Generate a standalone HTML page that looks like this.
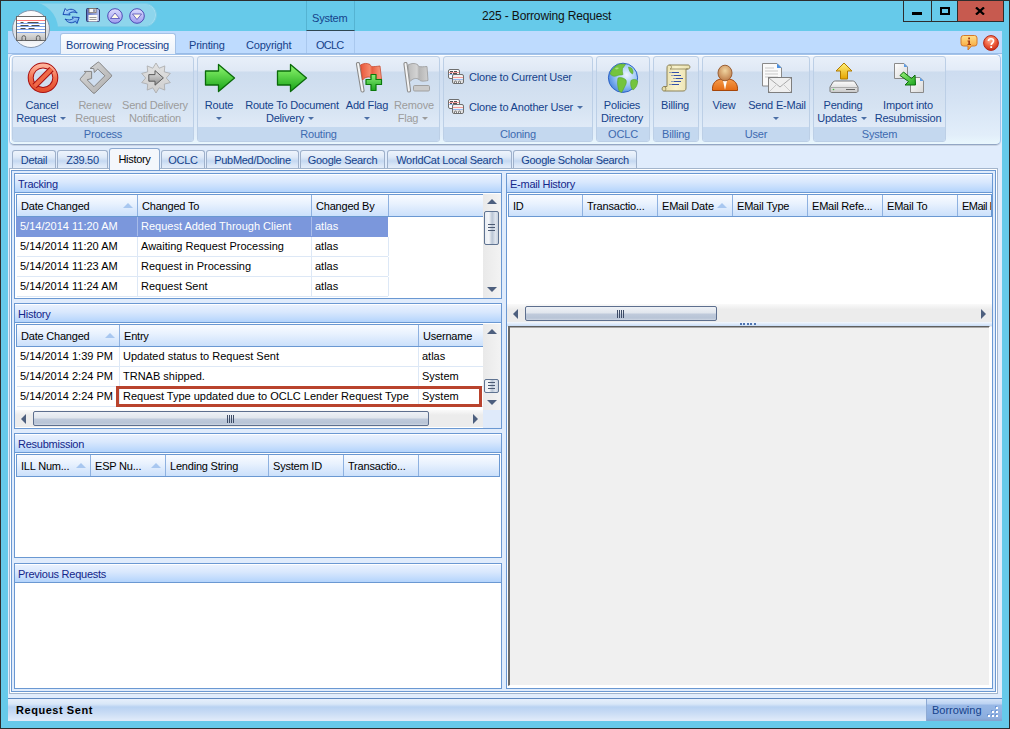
<!DOCTYPE html>
<html><head><meta charset="utf-8">
<style>
*{box-sizing:border-box;margin:0;padding:0}
html,body{width:1010px;height:729px;overflow:hidden;background:#66caea}
body{position:relative;font-family:"Liberation Sans",sans-serif;font-size:11px;color:#15428b}
.a{position:absolute}
.t{position:absolute;white-space:nowrap;line-height:13px}
.grp{position:absolute;top:56px;height:86px;border:1px solid #bccfe6;border-radius:3px;background:linear-gradient(#e8eff9 0,#dfe8f5 14px,#cddcee 15px,#d6e3f2 50px,#e0eaf7 70px);overflow:hidden}
.grp .lbl{position:absolute;left:0;right:0;bottom:0;height:14px;background:#c4d8ef;text-align:center;color:#3d6ab0;line-height:15px;letter-spacing:-0.2px}
.dis{color:#9c9c9c}
.dd{display:inline-block;width:0;height:0;border-left:3px solid transparent;border-right:3px solid transparent;border-top:3px solid #4b6fa6;vertical-align:middle;margin-left:4px;position:relative;top:-1px}
.ctab{position:absolute;top:150px;height:18px;border:1px solid #9eb0ca;border-bottom:0;border-radius:3px 3px 0 0;background:linear-gradient(#eef4fc 0,#dfeaf8 6px,#c5d8f1 10px,#d9e6f7 14px,#e6eefa 18px);text-align:center;color:#15428b;line-height:15px;padding-top:2px;letter-spacing:-0.3px}
.panel{position:absolute;border:1px solid #6a98d2;background:#fff}
.ph{position:absolute;left:0;right:0;top:0;height:19px;border-bottom:1px solid #6a98d2;background:linear-gradient(#e8f1fe 0,#d9e8fd 7px,#b0d2fc 18px);color:#13268a;padding-left:3px;line-height:19px;border-top:1px solid #fff;letter-spacing:-0.25px}
.gh{position:absolute;height:23px;border:1px solid #6a98d2;background:linear-gradient(#f9fbff 0,#e9f2fe 40%,#cbe0fb 100%)}
.gc{position:absolute;top:0;height:21px;border-right:1px solid #8eb1e0;color:#000;padding-left:4px;line-height:22px;letter-spacing:-0.2px;white-space:nowrap;overflow:hidden}
.row{position:absolute;height:20px;border-bottom:1px solid #dde8f6;color:#000;line-height:18px;white-space:nowrap}
.cell{position:absolute;top:0;height:19px;padding-left:3px;border-right:1px solid #dde8f6;overflow:hidden}
.sort{position:absolute;width:0;height:0;border-left:5px solid transparent;border-right:5px solid transparent;border-bottom:5px solid #a8c7f0}
</style></head><body>
<!-- window frame -->
<div class="a" style="left:0;top:0;width:1010px;height:729px;border:1px solid #2d2d2d;background:#66caea"></div>

<!-- QAT -->
<div class="a" style="left:36px;top:3px;width:121px;height:24px;border-radius:0 12px 12px 0;background:#8ed5ec;border:1px solid #7ccde8;box-shadow:inset -1px 0 0 #a6def0"></div>
<div class="a" style="left:4px;top:2px;width:54px;height:54px;border-radius:50%;background:#66caea"></div>
<!-- QAT icons -->
<svg class="a" style="left:62px;top:7px" width="18" height="18" viewBox="0 0 18 18">
<defs><linearGradient id="rfg" x1="0" y1="0" x2="1" y2="1"><stop offset="0" stop-color="#e6f4ff"/><stop offset="0.5" stop-color="#8cc2f4"/><stop offset="1" stop-color="#3b7fd8"/></linearGradient></defs>
<path d="M1 7.5 L3.2 1.5 L4.8 3.6 C8.5 1.2 12.5 2 15.2 6 C12.5 4.6 9.5 4.6 7 6.5 L8.2 8 Z" fill="url(#rfg)" stroke="#1b4db3" stroke-width="1" stroke-linejoin="round"/>
<path d="M17.2 10.5 L15 16.5 L13.4 14.4 C9.7 16.8 5.7 16 3 12 C5.7 13.4 8.7 13.4 11.2 11.5 L10 10 Z" fill="url(#rfg)" stroke="#1b4db3" stroke-width="1" stroke-linejoin="round"/>
</svg>
<svg class="a" style="left:86px;top:8px" width="14" height="14" viewBox="0 0 14 14">
<defs><linearGradient id="flp" x1="0" y1="0" x2="1" y2="0"><stop offset="0" stop-color="#5f6fb8"/><stop offset="0.5" stop-color="#8a9ad8"/><stop offset="1" stop-color="#b8c6f0"/></linearGradient></defs>
<path d="M0.5 1.5 A1 1 0 0 1 1.5 0.5 H12 L13.5 2 V12.5 A1 1 0 0 1 12.5 13.5 H1.5 A1 1 0 0 1 0.5 12.5 Z" fill="url(#flp)" stroke="#2e3a6e"/>
<rect x="3" y="0.5" width="7" height="4.2" fill="#f6f6f6" stroke="#7c6f60" stroke-width="0.8"/>
<rect x="7.5" y="1.3" width="1" height="2.6" fill="#2e3a6e"/>
<rect x="2.5" y="7" width="9" height="6.5" fill="#fbfbf6"/>
<line x1="3.5" y1="9.5" x2="10.5" y2="9.5" stroke="#9a9a9a"/><line x1="3.5" y1="11.5" x2="10.5" y2="11.5" stroke="#9a9a9a"/>
</svg>
<svg class="a" style="left:107px;top:8px" width="16" height="16" viewBox="0 0 16 16">
<defs><linearGradient id="pug" x1="0" y1="0" x2="0" y2="1"><stop offset="0" stop-color="#dcdcfd"/><stop offset="0.5" stop-color="#bdbcf6"/><stop offset="1" stop-color="#9d9bef"/></linearGradient></defs>
<circle cx="8" cy="8" r="7.3" fill="url(#pug)" stroke="#4c4ab4" stroke-width="1"/>
<path d="M3.5 10.5 L8 5 L12.5 10.5 Z" fill="#fffbe8" stroke="#4c4ab4" stroke-width="0.8" stroke-linejoin="round"/>
</svg>
<svg class="a" style="left:129px;top:8px" width="16" height="16" viewBox="0 0 16 16">
<circle cx="8" cy="8" r="7.3" fill="url(#pug)" stroke="#4c4ab4" stroke-width="1"/>
<path d="M3.5 6 L8 11.5 L12.5 6 Z" fill="#fffbe8" stroke="#4c4ab4" stroke-width="0.8" stroke-linejoin="round"/>
</svg>

<!-- title -->
<div class="t" style="left:482px;top:10px;font-size:12px;color:#111;letter-spacing:-0.15px">225 - Borrowing Request</div>

<!-- window buttons -->
<div class="a" style="left:903px;top:1px;width:29px;height:21px;border:1px solid #2d2d2d;border-top:0;background:#66caea"></div>
<div class="a" style="left:912px;top:12px;width:10px;height:3px;background:#000"></div>
<div class="a" style="left:931px;top:1px;width:27px;height:21px;border:1px solid #2d2d2d;border-top:0;background:#66caea"></div>
<div class="a" style="left:940px;top:7px;width:10px;height:8px;border:2px solid #000"></div>
<div class="a" style="left:957px;top:1px;width:47px;height:21px;border:1px solid #2d2d2d;border-top:0;background:#c75a4f"></div>
<svg class="a" style="left:975px;top:7px" width="10" height="8" viewBox="0 0 10 8"><path d="M1 0.5 L9 7.5 M9 0.5 L1 7.5" stroke="#000" stroke-width="2.3"/></svg>
<!-- System context group -->
<div class="a" style="left:306px;top:1px;width:49px;height:30px;border-left:1px solid #55b3d2;border-right:1px solid #55b3d2;border-bottom:1px solid #2e4753;background:#66caea"></div>
<div class="t" style="left:312px;top:12px;color:#15428b;letter-spacing:-0.2px">System</div>

<!-- ribbon tab row -->
<div class="a" style="left:8px;top:31px;width:994px;height:23px;background:#bedbfe"></div>
<div class="a" style="left:306px;top:31px;width:1px;height:22px;background:#a9c8ee"></div>
<div class="a" style="left:354px;top:31px;width:1px;height:22px;background:#a9c8ee"></div>
<div class="a" style="left:8px;top:53px;width:994px;height:1px;background:#99bbe6"></div>
<div class="a" style="left:8px;top:54px;width:994px;height:667px;background:#e0ecfc"></div>
<!-- selected ribbon tab -->
<div class="a" style="left:60px;top:33px;width:116px;height:22px;border:1px solid #a5c2e6;border-bottom:0;border-radius:3px 3px 0 0;background:linear-gradient(#fdfeff,#eaf1fa)"></div>
<div class="t" style="left:66px;top:39px;letter-spacing:-0.2px">Borrowing Processing</div>
<div class="t" style="left:189px;top:39px;letter-spacing:-0.2px">Printing</div>
<div class="t" style="left:246px;top:39px;letter-spacing:-0.2px">Copyright</div>
<div class="t" style="left:316px;top:39px;letter-spacing:-0.8px">OCLC</div>
<!-- info/help icons -->
<svg class="a" style="left:960px;top:34px" width="18" height="18" viewBox="0 0 18 18">
<defs><linearGradient id="infg" x1="0" y1="0" x2="0" y2="1"><stop offset="0" stop-color="#ffe08a"/><stop offset="1" stop-color="#f59a2c"/></linearGradient>
<radialGradient id="hlpg" cx="0.45" cy="0.3" r="0.7"><stop offset="0" stop-color="#ffb59a"/><stop offset="0.6" stop-color="#ec5a3a"/><stop offset="1" stop-color="#c72c1a"/></radialGradient></defs>
<path d="M3.5 1.5 H14.5 A2.5 2.5 0 0 1 17 4 V9.5 A2.5 2.5 0 0 1 14.5 12 H11.5 L8 16 L8 12 H3.5 A2.5 2.5 0 0 1 1 9.5 V4 A2.5 2.5 0 0 1 3.5 1.5 Z" fill="url(#infg)" stroke="#d4792a"/>
<rect x="8.2" y="3.5" width="1.8" height="1.8" fill="#a33a12"/>
<path d="M7.5 6.5 H10 V10 H11 V11 H7.5 V10 H8.3 V7.5 H7.5Z" fill="#a33a12"/>
</svg>
<svg class="a" style="left:983px;top:35px" width="16" height="16" viewBox="0 0 16 16">
<circle cx="8" cy="8" r="7.4" fill="url(#hlpg)" stroke="#b52718"/>
<path d="M5.5 6 C5.5 3 10.5 3 10.5 6 C10.5 8 8.2 8 8.2 10" fill="none" stroke="#fff" stroke-width="1.7"/>
<rect x="7.3" y="11.2" width="1.8" height="1.8" fill="#fff"/>
</svg>

<!-- ribbon body -->
<div class="a" style="left:9px;top:54px;width:992px;height:91px;border:1px solid #a3c3ea;border-bottom-color:#93a6c4;border-radius:5px;background:linear-gradient(#edf3fc 0,#e3ecf8 15px,#cddcf0 16px,#d5e3f4 45px,#e2eefa 80px,#e9f7fd 89px);box-shadow:inset 1px 1px 0 #fff,0 1px 0 #c9d4e3"></div>
<!-- app button -->
<svg class="a" style="left:11px;top:9px" width="40" height="40" viewBox="0 0 40 40">
<defs><linearGradient id="appg" x1="0" y1="0" x2="0" y2="1"><stop offset="0" stop-color="#ffffff"/><stop offset="0.45" stop-color="#e9ecf0"/><stop offset="0.55" stop-color="#d9dde3"/><stop offset="1" stop-color="#fbfcfd"/></linearGradient>
<linearGradient id="crdg" x1="0" y1="0" x2="0" y2="1"><stop offset="0" stop-color="#e0e0e0"/><stop offset="1" stop-color="#bdbdbd"/></linearGradient></defs>
<circle cx="20" cy="20" r="18.5" fill="url(#appg)" stroke="#8596ad" stroke-width="1"/>
<rect x="5.5" y="7.5" width="29" height="24" fill="#fff" stroke="#6a6a6a" stroke-width="1"/>
<rect x="6" y="24" width="28" height="7" fill="url(#crdg)"/>
<line x1="6" y1="11.5" x2="34" y2="11.5" stroke="#f77"/>
<line x1="6" y1="14.5" x2="34" y2="14.5" stroke="#7ea4ec"/>
<line x1="6" y1="17.5" x2="34" y2="17.5" stroke="#7ea4ec"/>
<line x1="6" y1="20.5" x2="34" y2="20.5" stroke="#7ea4ec"/>
<line x1="6" y1="23.5" x2="34" y2="23.5" stroke="#7ea4ec"/>
<path d="M9.5 13.5h3M16.5 13.5h11M9.5 16.5h8M20.5 16.5h8M9.5 19.5h5M17.5 19.5h6" stroke="#505050" stroke-width="1"/>
<path d="M9 31.5 h2 v-3 a1.8 1.8 0 0 1 3.6 0 v3 h10.8 v-3 a1.8 1.8 0 0 1 3.6 0 v3 h2" fill="none" stroke="#5e5e5e" stroke-width="1"/>
</svg>

<!-- groups -->
<div class="grp" style="left:12px;width:182px"><div class="lbl">Process</div></div>
<div class="grp" style="left:197px;width:243px"><div class="lbl">Routing</div></div>
<div class="grp" style="left:443px;width:150px"><div class="lbl">Cloning</div></div>
<div class="grp" style="left:596px;width:54px"><div class="lbl">OCLC</div></div>
<div class="grp" style="left:653px;width:46px"><div class="lbl">Billing</div></div>
<div class="grp" style="left:702px;width:108px"><div class="lbl">User</div></div>
<div class="grp" style="left:813px;width:133px"><div class="lbl">System</div></div>

<!-- ribbon button labels (centered on cx) -->
<div class="t" style="letter-spacing:-0.2px;left:-58px;width:200px;text-align:center;top:99px">Cancel</div>
<div class="t" style="letter-spacing:-0.2px;left:-59px;width:200px;text-align:center;top:112px">Request<span class="dd"></span></div>
<div class="t dis" style="letter-spacing:-0.2px;left:-5px;width:200px;text-align:center;top:99px">Renew</div>
<div class="t dis" style="letter-spacing:-0.2px;left:-5px;width:200px;text-align:center;top:112px">Request</div>
<div class="t dis" style="letter-spacing:-0.2px;left:55px;width:200px;text-align:center;top:99px">Send Delivery</div>
<div class="t dis" style="letter-spacing:-0.2px;left:55px;width:200px;text-align:center;top:112px">Notification</div>

<div class="t" style="letter-spacing:-0.2px;left:119px;width:200px;text-align:center;top:99px">Route</div>
<div class="t" style="letter-spacing:-0.2px;left:119px;width:200px;text-align:center;top:112px"><span class="dd" style="margin-left:0"></span></div>
<div class="t" style="letter-spacing:-0.2px;left:192px;width:200px;text-align:center;top:99px">Route To Document</div>
<div class="t" style="letter-spacing:-0.2px;left:190px;width:200px;text-align:center;top:112px">Delivery<span class="dd"></span></div>
<div class="t" style="letter-spacing:-0.2px;left:267px;width:200px;text-align:center;top:99px">Add Flag</div>
<div class="t" style="letter-spacing:-0.2px;left:267px;width:200px;text-align:center;top:112px"><span class="dd" style="margin-left:0"></span></div>
<div class="t dis" style="letter-spacing:-0.2px;left:314px;width:200px;text-align:center;top:99px">Remove</div>
<div class="t dis" style="letter-spacing:-0.2px;left:313px;width:200px;text-align:center;top:112px">Flag<span class="dd" style="border-top-color:#9c9c9c"></span></div>

<div class="t" style="letter-spacing:-0.2px;left:469px;top:71px">Clone to Current User</div>
<div class="t" style="letter-spacing:-0.2px;left:469px;top:101px">Clone to Another User<span class="dd"></span></div>

<div class="t" style="letter-spacing:-0.2px;left:522px;width:200px;text-align:center;top:99px">Policies</div>
<div class="t" style="letter-spacing:-0.2px;left:522px;width:200px;text-align:center;top:112px">Directory</div>
<div class="t" style="letter-spacing:-0.2px;left:575px;width:200px;text-align:center;top:99px">Billing</div>
<div class="t" style="letter-spacing:-0.2px;left:624px;width:200px;text-align:center;top:99px">View</div>
<div class="t" style="letter-spacing:-0.2px;left:677px;width:200px;text-align:center;top:99px">Send E-Mail</div>
<div class="t" style="letter-spacing:-0.2px;left:676px;width:200px;text-align:center;top:112px"><span class="dd" style="margin-left:0"></span></div>
<div class="t" style="letter-spacing:-0.2px;left:743px;width:200px;text-align:center;top:99px">Pending</div>
<div class="t" style="letter-spacing:-0.2px;left:742px;width:200px;text-align:center;top:112px">Updates<span class="dd"></span></div>
<div class="t" style="letter-spacing:-0.2px;left:808px;width:200px;text-align:center;top:99px">Import into</div>
<div class="t" style="letter-spacing:-0.2px;left:808px;width:200px;text-align:center;top:112px">Resubmission</div>

<!-- ribbon icons -->
<svg class="a" style="left:27px;top:62px" width="32" height="32" viewBox="0 0 32 32">
<defs><linearGradient id="redg" x1="0" y1="0" x2="0" y2="1"><stop offset="0" stop-color="#ffb39a"/><stop offset="0.5" stop-color="#f2704f"/><stop offset="1" stop-color="#e4502e"/></linearGradient></defs>
<circle cx="16" cy="15.7" r="12.3" fill="none" stroke="#a80f0f" stroke-width="6"/>
<circle cx="16" cy="15.7" r="12.3" fill="none" stroke="url(#redg)" stroke-width="4"/>
<path d="M24.5 7.2 L7.5 24.2" stroke="#a80f0f" stroke-width="6"/>
<path d="M24.5 7.2 L7.5 24.2" stroke="#f06a48" stroke-width="4"/>
</svg>
<svg class="a" style="left:78px;top:60px" width="36" height="36" viewBox="0 0 36 36">
<defs><linearGradient id="rnw" x1="0" y1="0" x2="1" y2="1"><stop offset="0" stop-color="#dadada"/><stop offset="0.5" stop-color="#c4c4c4"/><stop offset="1" stop-color="#adadad"/></linearGradient></defs>
<path d="M13.6 11.4 L13.6 18.5 L9.1 19.8 L16 26.7 L26.9 15.8 L19.8 9.1 L16.3 12.4 L15.8 8.6 L12.1 8.4 L19.8 2.3 Q20.5 1.8 21.2 2.4 L33.3 14.9 Q34 15.8 33.2 16.7 L17 32.9 Q16 33.8 15 32.9 L2.6 20.2 Q1.8 19.2 2.6 18.3 L7.7 12.6 L6.2 11.4 Z" fill="url(#rnw)" stroke="#858585" stroke-width="1" stroke-linejoin="round"/>
</svg>
<svg class="a" style="left:138px;top:60px" width="36" height="36" viewBox="0 0 36 36">
<defs><linearGradient id="stg" x1="0" y1="0" x2="0" y2="1"><stop offset="0" stop-color="#e2e2e2"/><stop offset="1" stop-color="#cfcfcf"/></linearGradient>
<linearGradient id="sag" x1="0" y1="0" x2="0" y2="1"><stop offset="0" stop-color="#e4e4e4"/><stop offset="1" stop-color="#8e8e8e"/></linearGradient></defs>
<path d="M18.0 3.0 L21.2 8.2 L26.8 5.9 L26.3 11.9 L32.3 13.4 L28.3 18.0 L32.3 22.6 L26.3 24.1 L26.8 30.1 L21.2 27.8 L18.0 33.0 L14.8 27.8 L9.2 30.1 L9.7 24.1 L3.7 22.6 L7.7 18.0 L3.7 13.4 L9.7 11.9 L9.2 5.9 L14.8 8.2 Z" fill="url(#stg)" stroke="#a8a8a8" stroke-width="0.8" stroke-linejoin="round"/>
<path d="M10.8 14.6 H17 V10.6 L25.4 17.9 L17 25.2 V21.2 H10.8 Z" fill="url(#sag)" stroke="#5c5c5c" stroke-width="1" stroke-linejoin="round"/>
</svg>
<svg class="a" style="left:204px;top:63px" width="32" height="30" viewBox="0 0 32 30">
<defs><linearGradient id="grg" x1="0" y1="0" x2="0" y2="1"><stop offset="0" stop-color="#90f870"/><stop offset="1" stop-color="#16a216"/></linearGradient></defs>
<path d="M1.5 8 H14.5 V1.5 L30.5 15 L14.5 28.5 V22 H1.5 Z" fill="url(#grg)" stroke="#0a6a0a" stroke-width="1.3" stroke-linejoin="round"/>
</svg>
<svg class="a" style="left:276px;top:63px" width="32" height="30" viewBox="0 0 32 30">
<path d="M1.5 8 H14.5 V1.5 L30.5 15 L14.5 28.5 V22 H1.5 Z" fill="url(#grg)" stroke="#0a6a0a" stroke-width="1.3" stroke-linejoin="round"/>
</svg>
<svg class="a" style="left:354px;top:62px" width="32" height="32" viewBox="0 0 32 32">
<defs><linearGradient id="flr" x1="0" y1="0" x2="1" y2="0"><stop offset="0" stop-color="#e9553a"/><stop offset="0.45" stop-color="#f58a6c"/><stop offset="0.55" stop-color="#e85d40"/><stop offset="1" stop-color="#f7a184"/></linearGradient>
<linearGradient id="plg" x1="0" y1="0" x2="0" y2="1"><stop offset="0" stop-color="#8ef07a"/><stop offset="1" stop-color="#1da51d"/></linearGradient>
<linearGradient id="flg" x1="0" y1="0" x2="1" y2="0"><stop offset="0" stop-color="#bcbcbc"/><stop offset="0.45" stop-color="#d4d4d4"/><stop offset="0.55" stop-color="#b5b5b5"/><stop offset="1" stop-color="#d0d0d0"/></linearGradient></defs>
<path d="M4 2 L8.5 28.5" stroke="#8a8a8a" stroke-width="4.2" stroke-linecap="round"/>
<path d="M4 2 L8.5 28.5" stroke="#f4f4f4" stroke-width="2" stroke-linecap="round"/>
<path d="M6.5 3 C10 1 13 1 16 2.5 C17 5 18 5 26 4 L27.5 17 C22 18 19 18 17.5 16 C15 14 11 15 8.5 18 Z" fill="url(#flr)" stroke="#c84a30" stroke-width="0.8"/>
<path d="M17 12.5 H22 V17.5 H27.5 V22.5 H22 V28.5 H17 V22.5 H12 V17.5 H17 Z" fill="url(#plg)" stroke="#0b7a0b" stroke-width="1.2" stroke-linejoin="round"/>
</svg>
<svg class="a" style="left:401px;top:62px" width="32" height="32" viewBox="0 0 32 32">
<path d="M4.5 2 L8 28.5" stroke="#8f8f8f" stroke-width="4.2" stroke-linecap="round"/>
<path d="M4.5 2 L8 28.5" stroke="#f4f4f4" stroke-width="2" stroke-linecap="round"/>
<path d="M7 3 C10.5 1 13.5 1 16.5 2.5 C17.5 5 18.5 5 26 4.5 L27 18.5 C22 19.5 19.5 19.5 18 17.5 C15.5 15.5 11.5 16.5 9 19.5 Z" fill="url(#flg)" stroke="#9b9b9b" stroke-width="0.8"/>
<rect x="12.5" y="23.5" width="16" height="5.5" rx="1.2" fill="#cacaca" stroke="#a0a0a0"/>
</svg>
<svg class="a" style="left:447px;top:68px" width="18" height="17" viewBox="0 0 18 17">
<rect x="1.5" y="1.5" width="11" height="9" rx="1.5" fill="#fafafa" stroke="#6e6e6e"/>
<path d="M2 4.5 H12" stroke="#f49a9a"/><path d="M3 3.5 h3 M7 3.5 h3 M3 5.5 h2 M6 5.5 h4" stroke="#505050" stroke-width="1"/>
<path d="M2 6.5 H12" stroke="#9bb8ee"/>
<rect x="5.5" y="6.5" width="11" height="9" rx="1.5" fill="#f2f2f2" stroke="#6e6e6e"/>
<path d="M6 9.5 H16" stroke="#f49a9a"/><path d="M6 11.5 H16" stroke="#9bb8ee"/>
<path d="M6 13 H16" stroke="#cfcfcf"/>
<path d="M7.5 15.5 v-1.5 a1 1 0 0 1 2 0 v1.5 M11.5 15.5 v-1.5 a1 1 0 0 1 2 0 v1.5" fill="none" stroke="#6e6e6e" stroke-width="0.9"/>
</svg>
<svg class="a" style="left:447px;top:98px" width="18" height="17" viewBox="0 0 18 17">
<rect x="1.5" y="1.5" width="11" height="9" rx="1.5" fill="#fafafa" stroke="#6e6e6e"/>
<path d="M2 4.5 H12" stroke="#f49a9a"/><path d="M3 3.5 h3 M7 3.5 h3 M3 5.5 h2 M6 5.5 h4" stroke="#505050" stroke-width="1"/>
<path d="M2 6.5 H12" stroke="#9bb8ee"/>
<rect x="5.5" y="6.5" width="11" height="9" rx="1.5" fill="#f2f2f2" stroke="#6e6e6e"/>
<path d="M6 9.5 H16" stroke="#f49a9a"/><path d="M6 11.5 H16" stroke="#9bb8ee"/>
<path d="M6 13 H16" stroke="#cfcfcf"/>
<path d="M7.5 15.5 v-1.5 a1 1 0 0 1 2 0 v1.5 M11.5 15.5 v-1.5 a1 1 0 0 1 2 0 v1.5" fill="none" stroke="#6e6e6e" stroke-width="0.9"/>
</svg>
<svg class="a" style="left:607px;top:62px" width="32" height="32" viewBox="0 0 32 32">
<defs><radialGradient id="glb" cx="0.62" cy="0.4" r="0.65"><stop offset="0" stop-color="#eef6ff"/><stop offset="0.55" stop-color="#9cc6f6"/><stop offset="1" stop-color="#4f8ce0"/></radialGradient></defs>
<circle cx="16" cy="15.8" r="14.6" fill="url(#glb)" stroke="#2d62c6" stroke-width="1"/>
<path d="M3.2 12 C4.5 7 8.5 3.2 13.5 2 L18.5 2.3 C17.5 4 16.5 5 15.5 6.5 C15 8.5 15.5 10.5 16 12.5 C14 13.5 12.5 12.5 10.5 13.5 C8.5 14.5 6.5 14.5 5 13.5 Z" fill="#74c43e" stroke="#56a22a" stroke-width="0.6"/>
<path d="M8 6.5 C9 5.5 11 5 12 6 C11 7.5 9 8 8 6.5Z" fill="#a8dc80"/>
<path d="M11 16 C14 15 17 16 19 18 C20 21 18.5 23 17.5 25 C16.5 27 15.5 29 14.5 30.5 C12.5 30 11.5 28 11.2 26 C10.5 23 10.3 19 11 16 Z" fill="#74c43e" stroke="#56a22a" stroke-width="0.6"/>
<path d="M24 18.5 C26 17 29 17 30.6 19 C30.6 23 29 26 26 28 C24 26 23 22 24 18.5 Z" fill="#74c43e" stroke="#56a22a" stroke-width="0.6"/>
<path d="M21.5 5 L24.5 6 C26 8 26.5 10 25.5 12 C23.5 11 22 8.5 21.5 5 Z" fill="#74c43e" stroke="#56a22a" stroke-width="0.6"/>
</svg>
<svg class="a" style="left:661px;top:64px" width="30" height="28" viewBox="0 0 30 28">
<defs><linearGradient id="scg" x1="0" y1="0" x2="1" y2="0"><stop offset="0" stop-color="#e6dca6"/><stop offset="0.5" stop-color="#f8f2cc"/><stop offset="1" stop-color="#e9e0ae"/></linearGradient></defs>
<path d="M6 4 C6 1.5 7 1 9 1 H27 C29.5 1 29.5 5 27 5 H25 V24 C25 26 24 27 22 27 H3 C0.5 27 0.5 22.5 3 22.5 H6 Z" fill="url(#scg)" stroke="#8c8257" stroke-width="1"/>
<path d="M8.5 1 C11 1 11 5 9 5 H27" fill="none" stroke="#8c8257" stroke-width="0.8"/>
<path d="M3 22.5 C5 22.5 5.5 25 4 27" fill="none" stroke="#8c8257" stroke-width="0.8"/>
<path d="M8.5 8.5 h1 M10.5 8.5 H18 M10.5 11.5 h1 M12.5 11.5 H20 M12.5 14.5 h1 M14.5 14.5 H22 M10.5 17.5 h1 M12.5 17.5 H20 M8.5 20.5 h1 M10.5 20.5 H18" stroke="#3552a8" stroke-width="1.2"/>
</svg>
<svg class="a" style="left:711px;top:64px" width="28" height="28" viewBox="0 0 28 28">
<defs><linearGradient id="org" x1="0" y1="0" x2="0" y2="1"><stop offset="0" stop-color="#f59c4c"/><stop offset="1" stop-color="#e46a12"/></linearGradient>
<radialGradient id="hd" cx="0.5" cy="0.35" r="0.6"><stop offset="0" stop-color="#f0d4a0"/><stop offset="1" stop-color="#c28350"/></radialGradient></defs>
<path d="M1.5 26.5 C1 20 4 16 10 15 L14 17 L18 15 C24 16 27 20 26.5 26.5 Z" fill="url(#org)" stroke="#a6460a" stroke-width="1"/>
<path d="M12 16.5 L14 26 L16 16.5Z" fill="#fff"/>
<ellipse cx="14" cy="9" rx="7" ry="7.8" fill="url(#hd)" stroke="#9b5f34" stroke-width="1"/>
</svg>
<svg class="a" style="left:761px;top:62px" width="32" height="32" viewBox="0 0 32 32">
<path d="M1.5 1.5 H16 L20.5 6 V24 H1.5 Z" fill="#fafafa" stroke="#8a8a8a"/>
<path d="M16 1.5 L20.5 6 H16 Z" fill="#4a90e2"/>
<path d="M4 6 H13 M4 9 H17 M4 12 H17 M4 15 H17" stroke="#c9c9c9" stroke-width="1"/>
<rect x="7.5" y="15.5" width="23" height="15" fill="#efefef" stroke="#7e7e7e"/>
<path d="M8 16 L19 25 L30 16" fill="none" stroke="#a9a9a9"/>
<path d="M8 30 L16 22 M30 30 L22 22" stroke="#c9c9c9"/>
</svg>
<svg class="a" style="left:828px;top:62px" width="32" height="32" viewBox="0 0 32 32">
<defs><linearGradient id="yl" x1="0" y1="0" x2="0" y2="1"><stop offset="0" stop-color="#fff27a"/><stop offset="1" stop-color="#e6a400"/></linearGradient>
<linearGradient id="drv" x1="0" y1="0" x2="0" y2="1"><stop offset="0" stop-color="#fdfdfd"/><stop offset="1" stop-color="#c9c9c9"/></linearGradient></defs>
<path d="M16 1 L24 9 H19.5 V17 H12.5 V9 H8 Z" fill="url(#yl)" stroke="#b07a00" stroke-width="1" stroke-linejoin="round"/>
<path d="M5 20 C6 19 7 19 8 19 H24 C25 19 26 19 27 20 L30 25 V29 C30 30 29 30.5 28 30.5 H4 C3 30.5 2 30 2 29 V25 Z" fill="url(#drv)" stroke="#777" stroke-width="1"/>
<path d="M2.5 25.5 H29.5" stroke="#aaa"/>
<circle cx="5.5" cy="27.5" r="0.8" fill="#3ac03a"/>
<path d="M18 27.5 H27" stroke="#666" stroke-width="1"/>
</svg>
<svg class="a" style="left:893px;top:62px" width="32" height="32" viewBox="0 0 32 32">
<defs><linearGradient id="docg" x1="0" y1="0" x2="1" y2="1"><stop offset="0" stop-color="#ffffff"/><stop offset="1" stop-color="#d8d8d8"/></linearGradient>
<linearGradient id="arg2" x1="0" y1="0" x2="1" y2="1"><stop offset="0" stop-color="#9af27a"/><stop offset="1" stop-color="#1ea61e"/></linearGradient></defs>
<path d="M1.5 1.5 H11 L14.5 5 V16.5 H1.5 Z" fill="url(#docg)" stroke="#8a8a8a"/>
<path d="M11 1.5 L14.5 5 H11 Z" fill="#5a9be6"/>
<path d="M17.5 15.5 H27 L30.5 19 V30.5 H17.5 Z" fill="url(#docg)" stroke="#8a8a8a"/>
<path d="M27 15.5 L30.5 19 H27 Z" fill="#5a9be6"/>
<path d="M7 13.5 L10.5 10 L18.5 16.5 L22 13 L22.5 23 L12 23 L15.5 19.5 Z" fill="url(#arg2)" stroke="#0d6e0d" stroke-width="1" stroke-linejoin="round"/>
</svg>
<!-- content tabs -->
<div class="ctab" style="left:12px;width:44px">Detail</div>
<div class="ctab" style="left:57px;width:51px">Z39.50</div>
<div class="ctab" style="left:161px;width:44px">OCLC</div>
<div class="ctab" style="left:206px;width:93px">PubMed/Docline</div>
<div class="ctab" style="left:300px;width:85px">Google Search</div>
<div class="ctab" style="left:387px;width:125px">WorldCat Local Search</div>
<div class="ctab" style="left:513px;width:124px">Google Scholar Search</div>

<!-- content frames -->
<div class="a" style="left:9px;top:168px;width:989px;height:526px;border:1px solid #a3b5cc;background:#fff"></div>
<div class="a" style="left:11px;top:170px;width:985px;height:522px;border:1px solid #6b98d1;background:#e0ecfc"></div>
<div class="ctab" style="left:109px;top:148px;width:51px;height:20px;background:#f4f7fc;color:#000;border-color:#8eaad0;padding-top:3px">History</div>
<div class="a" style="left:109px;top:168px;width:51px;height:2px;background:#f4f7fc;border-left:1px solid #8eaad0;border-right:1px solid #8eaad0"></div>

<!-- Tracking panel -->
<div class="panel" style="left:14px;top:173px;width:488px;height:126px">
  <div class="ph">Tracking</div>
</div>
<div class="gh" style="left:16px;top:194px;width:468px">
  <div class="gc" style="left:0;width:121px">Date Changed</div><div class="sort" style="left:106px;top:8px"></div>
  <div class="gc" style="left:121px;width:174px">Changed To</div>
  <div class="gc" style="left:295px;width:77px">Changed By</div>
  <div class="gc" style="left:372px;width:95px;border-right:0"></div>
</div>
<div class="a" style="left:16px;top:217px;width:1px;height:20px;background:#7b97dc"></div>
<div class="row" style="left:17px;top:217px;width:371px;background:#7b97dc;color:#fff;border-bottom-color:#7b97dc">
  <div class="cell" style="left:0;width:121px;border-right-color:#a7bbe9">5/14/2014 11:20 AM</div><div class="cell" style="left:121px;width:174px;border-right-color:#a7bbe9">Request Added Through Client</div><div class="cell" style="left:295px;width:77px;border-right:0">atlas</div>
</div>
<div class="row" style="left:17px;top:237px;width:371px">
  <div class="cell" style="left:0;width:121px">5/14/2014 11:20 AM</div><div class="cell" style="left:121px;width:174px">Awaiting Request Processing</div><div class="cell" style="left:295px;width:77px">atlas</div>
</div>
<div class="row" style="left:17px;top:257px;width:371px">
  <div class="cell" style="left:0;width:121px">5/14/2014 11:23 AM</div><div class="cell" style="left:121px;width:174px">Request in Processing</div><div class="cell" style="left:295px;width:77px">atlas</div>
</div>
<div class="row" style="left:17px;top:277px;width:371px">
  <div class="cell" style="left:0;width:121px">5/14/2014 11:24 AM</div><div class="cell" style="left:121px;width:174px">Request Sent</div><div class="cell" style="left:295px;width:77px">atlas</div>
</div>
<!-- tracking vscroll -->
<div class="a" style="left:483px;top:194px;width:18px;height:104px;background:linear-gradient(90deg,#e9e9e9,#f3f3f3)"></div>
<div class="a" style="left:487px;top:199px;width:0;height:0;border-left:5px solid transparent;border-right:5px solid transparent;border-bottom:5px solid #4d5f7e"></div>
<div class="a" style="left:484px;top:211px;width:15px;height:34px;border:1px solid #5f7391;border-radius:2px;background:linear-gradient(90deg,#e9edf3 0,#f4f6f9 30%,#b9c5d5 55%,#dfe5ee 80%,#c9d3df)"></div>
<div class="a" style="left:488px;top:224px;width:7px;height:7px;border-top:1px solid #4b5a73;border-bottom:1px solid #4b5a73"></div>
<div class="a" style="left:488px;top:227px;width:7px;height:1px;background:#4b5a73"></div>
<div class="a" style="left:487px;top:287px;width:0;height:0;border-left:5px solid transparent;border-right:5px solid transparent;border-top:5px solid #4d5f7e"></div>

<!-- History panel -->
<div class="panel" style="left:14px;top:303px;width:488px;height:126px">
  <div class="ph">History</div>
</div>
<div class="gh" style="left:16px;top:324px;width:468px">
  <div class="gc" style="left:0;width:103px">Date Changed</div><div class="sort" style="left:88px;top:8px"></div>
  <div class="gc" style="left:103px;width:299px">Entry</div>
  <div class="gc" style="left:402px;width:65px;border-right:0">Username</div>
</div>
<div class="row" style="left:17px;top:347px;width:466px">
  <div class="cell" style="left:0;width:103px">5/14/2014 1:39 PM</div><div class="cell" style="left:103px;width:299px">Updated status to Request Sent</div><div class="cell" style="left:402px;width:65px;border-right:0">atlas</div>
</div>
<div class="row" style="left:17px;top:367px;width:466px">
  <div class="cell" style="left:0;width:103px">5/14/2014 2:24 PM</div><div class="cell" style="left:103px;width:299px">TRNAB shipped.</div><div class="cell" style="left:402px;width:65px;border-right:0">System</div>
</div>
<div class="row" style="left:17px;top:387px;width:466px">
  <div class="cell" style="left:0;width:103px">5/14/2014 2:24 PM</div><div class="cell" style="left:103px;width:299px">Request Type updated due to OCLC Lender Request Type</div><div class="cell" style="left:402px;width:65px;border-right:0">System</div>
</div>
<div class="a" style="left:116px;top:386px;width:366px;height:21px;border:3px solid #b9432d"></div>
<!-- history vscroll -->
<div class="a" style="left:483px;top:324px;width:18px;height:86px;background:linear-gradient(90deg,#e9e9e9,#f3f3f3)"></div>
<div class="a" style="left:487px;top:329px;width:0;height:0;border-left:5px solid transparent;border-right:5px solid transparent;border-bottom:5px solid #4d5f7e"></div>
<div class="a" style="left:484px;top:379px;width:15px;height:14px;border:1px solid #5f7391;border-radius:2px;background:linear-gradient(90deg,#e9edf3 0,#f4f6f9 30%,#b9c5d5 55%,#dfe5ee 80%,#c9d3df)"></div>
<div class="a" style="left:488px;top:382px;width:7px;height:7px;border-top:1px solid #4b5a73;border-bottom:1px solid #4b5a73"></div>
<div class="a" style="left:488px;top:385px;width:7px;height:1px;background:#4b5a73"></div>
<div class="a" style="left:487px;top:400px;width:0;height:0;border-left:5px solid transparent;border-right:5px solid transparent;border-top:5px solid #4d5f7e"></div>
<!-- history hscroll -->
<div class="a" style="left:483px;top:410px;width:18px;height:18px;background:#dfeafa"></div>
<div class="a" style="left:15px;top:410px;width:468px;height:17px;background:linear-gradient(#fafafa,#ececec 30%,#ececec)"></div>
<div class="a" style="left:21px;top:414px;width:0;height:0;border-top:5px solid transparent;border-bottom:5px solid transparent;border-right:5px solid #4d5f7e"></div>
<div class="a" style="left:33px;top:411px;width:396px;height:15px;border:1px solid #5d6f8e;border-radius:2px;background:linear-gradient(#eef1f6 0,#e1e6ed 45%,#bfcadb 55%,#b8c4d6 85%,#cdd6e3 100%)"></div>
<div class="a" style="left:227px;top:415px;width:7px;height:8px;background:repeating-linear-gradient(90deg,#3e4c66 0 1px,transparent 1px 2px)"></div>
<div class="a" style="left:473px;top:414px;width:0;height:0;border-top:5px solid transparent;border-bottom:5px solid transparent;border-left:5px solid #4d5f7e"></div>

<!-- Resubmission panel -->
<div class="panel" style="left:14px;top:433px;width:488px;height:125px">
  <div class="ph">Resubmission</div>
</div>
<div class="gh" style="left:16px;top:454px;width:484px">
  <div class="gc" style="left:0;width:74px">ILL Num...</div><div class="sort" style="left:59px;top:8px"></div>
  <div class="gc" style="left:74px;width:75px">ESP Nu...</div><div class="sort" style="left:134px;top:8px"></div>
  <div class="gc" style="left:149px;width:103px">Lending String</div>
  <div class="gc" style="left:252px;width:75px">System ID</div>
  <div class="gc" style="left:327px;width:75px">Transactio...</div>
  <div class="gc" style="left:402px;width:80px;border-right:0"></div>
</div>

<!-- Previous Requests panel -->
<div class="panel" style="left:14px;top:563px;width:488px;height:126px">
  <div class="ph">Previous Requests</div>
</div>

<!-- E-mail History panel -->
<div class="panel" style="left:506px;top:173px;width:487px;height:516px;background:#f0f0f0">
  <div class="ph">E-mail History</div>
</div>
<div class="a" style="left:507px;top:193px;width:485px;height:111px;background:#fff"></div>
<div class="gh" style="left:508px;top:194px;width:484px;overflow:hidden">
  <div class="gc" style="left:0;width:74px">ID</div>
  <div class="gc" style="left:74px;width:75px">Transactio...</div>
  <div class="gc" style="left:149px;width:75px">EMail Date</div><div class="sort" style="left:208px;top:8px"></div>
  <div class="gc" style="left:224px;width:75px">EMail Type</div>
  <div class="gc" style="left:299px;width:75px">EMail Refe...</div>
  <div class="gc" style="left:374px;width:75px">EMail To</div>
  <div class="gc" style="left:449px;width:75px;letter-spacing:-0.5px">EMail From</div>
</div>
<!-- email hscroll -->
<div class="a" style="left:507px;top:304px;width:485px;height:18px;background:linear-gradient(#fafafa,#ececec 30%,#ececec)"></div>
<div class="a" style="left:513px;top:309px;width:0;height:0;border-top:5px solid transparent;border-bottom:5px solid transparent;border-right:5px solid #4d5f7e"></div>
<div class="a" style="left:525px;top:306px;width:192px;height:15px;border:1px solid #5d6f8e;border-radius:2px;background:linear-gradient(#eef1f6 0,#e1e6ed 45%,#bfcadb 55%,#b8c4d6 85%,#cdd6e3 100%)"></div>
<div class="a" style="left:617px;top:310px;width:7px;height:8px;background:repeating-linear-gradient(90deg,#3e4c66 0 1px,transparent 1px 2px)"></div>
<div class="a" style="left:981px;top:309px;width:0;height:0;border-top:5px solid transparent;border-bottom:5px solid transparent;border-left:5px solid #4d5f7e"></div>
<!-- splitter -->
<div class="a" style="left:507px;top:322px;width:485px;height:4px;background:linear-gradient(#f4f8fd,#c9def8)"></div>
<div class="a" style="left:740px;top:323px;width:17px;height:2px;background:repeating-linear-gradient(90deg,#4f74b0 0 2px,transparent 2px 3.4px)"></div>
<!-- lower sunken area -->
<div class="a" style="left:507px;top:327px;width:485px;height:361px;background:#fff"></div>
<div class="a" style="left:508px;top:326px;width:482px;height:360px;border-left:2px solid #6b6b6b;border-top:1px solid #5f5f5f;border-right:1px solid #fff;border-bottom:1px solid #fff;background:#f0f0f0;box-shadow:inset 0 1px 0 #a9a9a9"></div>

<!-- status bar -->
<div class="a" style="left:8px;top:698px;width:994px;height:1px;background:#5e88c0"></div>
<div class="a" style="left:8px;top:699px;width:994px;height:22px;background:linear-gradient(#e6effb 0,#d9e7f8 5px,#b9d2f2 8px,#c6daf4 13px,#dfeaf9 21px)"></div>
<div class="t" style="left:16px;top:704px;font-weight:bold;color:#000;letter-spacing:0.55px">Request Sent</div>
<div class="a" style="left:926px;top:699px;width:76px;height:22px;border-left:1px solid #8eaad4;background:linear-gradient(#d3e3f8 0,#bcd2f2 5px,#98b8e6 6px,#8badde 19px,#86a3cf 21px)"></div>
<div class="t" style="left:932px;top:704px;color:#15428b">Borrowing</div>
<div class="a" style="left:996px;top:707px;width:2px;height:2px;background:#fff;box-shadow:-1px -1px 0 #6f98d6"></div><div class="a" style="left:992px;top:711px;width:2px;height:2px;background:#fff;box-shadow:-1px -1px 0 #6f98d6"></div><div class="a" style="left:996px;top:711px;width:2px;height:2px;background:#fff;box-shadow:-1px -1px 0 #6f98d6"></div><div class="a" style="left:988px;top:715px;width:2px;height:2px;background:#fff;box-shadow:-1px -1px 0 #6f98d6"></div><div class="a" style="left:992px;top:715px;width:2px;height:2px;background:#fff;box-shadow:-1px -1px 0 #6f98d6"></div><div class="a" style="left:996px;top:715px;width:2px;height:2px;background:#fff;box-shadow:-1px -1px 0 #6f98d6"></div>
</body></html>
